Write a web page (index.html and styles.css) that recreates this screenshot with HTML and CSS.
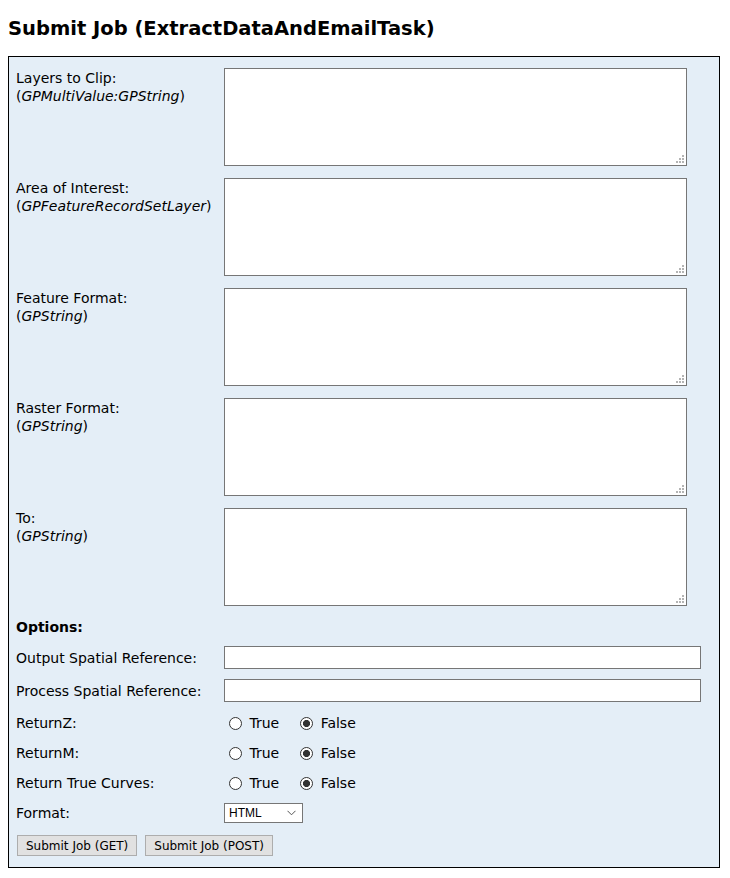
FILE: index.html
```html
<!DOCTYPE html>
<html>
<head>
<meta charset="utf-8">
<title>Submit Job (ExtractDataAndEmailTask)</title>
<link rel="stylesheet" href="styles.css">
</head>
<body>
<h2 class="title">Submit Job (ExtractDataAndEmailTask)</h2>
<form class="panel">
  <div class="row area-row">
    <label class="lbl">Layers to Clip:<br>(<i>GPMultiValue:GPString</i>)</label>
    <div class="area-wrap"><textarea class="area" autofocus></textarea><span class="grip"></span></div>
  </div>
  <div class="row area-row">
    <label class="lbl">Area of Interest:<br>(<i>GPFeatureRecordSetLayer</i>)</label>
    <div class="area-wrap"><textarea class="area"></textarea><span class="grip"></span></div>
  </div>
  <div class="row area-row">
    <label class="lbl">Feature Format:<br>(<i>GPString</i>)</label>
    <div class="area-wrap"><textarea class="area"></textarea><span class="grip"></span></div>
  </div>
  <div class="row area-row">
    <label class="lbl">Raster Format:<br>(<i>GPString</i>)</label>
    <div class="area-wrap"><textarea class="area"></textarea><span class="grip"></span></div>
  </div>
  <div class="row area-row">
    <label class="lbl">To:<br>(<i>GPString</i>)</label>
    <div class="area-wrap"><textarea class="area"></textarea><span class="grip"></span></div>
  </div>
  <div class="options-head">Options:</div>
  <div class="row opt-row">
    <label class="lbl">Output Spatial Reference:</label>
    <input class="txt" type="text">
  </div>
  <div class="row opt-row">
    <label class="lbl">Process Spatial Reference:</label>
    <input class="txt" type="text">
  </div>
  <div class="row opt-row radio-row first-radio">
    <label class="lbl">ReturnZ:</label>
    <div class="radios">
      <label class="ropt"><input class="radio" type="radio" name="rz"> True</label>
      <label class="ropt"><input class="radio" type="radio" name="rz" checked> False</label>
    </div>
  </div>
  <div class="row opt-row radio-row">
    <label class="lbl">ReturnM:</label>
    <div class="radios">
      <label class="ropt"><input class="radio" type="radio" name="rm"> True</label>
      <label class="ropt"><input class="radio" type="radio" name="rm" checked> False</label>
    </div>
  </div>
  <div class="row opt-row radio-row">
    <label class="lbl">Return True Curves:</label>
    <div class="radios">
      <label class="ropt"><input class="radio" type="radio" name="rc"> True</label>
      <label class="ropt"><input class="radio" type="radio" name="rc" checked> False</label>
    </div>
  </div>
  <div class="row opt-row">
    <label class="lbl">Format:</label>
    <div class="select">
      <span class="select-val">HTML</span>
      <svg class="chev" width="9" height="6" viewBox="0 0 9 6"><path d="M0.5 0.8 L4.5 4.8 L8.5 0.8" fill="none" stroke="#555" stroke-width="1"/></svg>
    </div>
  </div>
  <div class="buttons">
    <button type="button" class="btn">Submit Job (GET)</button>
    <button type="button" class="btn">Submit Job (POST)</button>
  </div>
</form>
</body>
</html>
```
FILE: styles.css
```css
html, body {
  background: #ffffff;
}
body {
  margin: 8px;
  font-family: "DejaVu Sans", Verdana, sans-serif;
  font-size: 14px;
  color: #000;
}
.title {
  font-size: 19.5px;
  font-weight: bold;
  margin: 10px 0 14px 0;
  line-height: 22px;
  height: 24px;
}
.panel {
  width: 712px;
  box-sizing: border-box;
  border: 1px solid #000;
  background: #e4eef7;
  padding: 11px 7px 11px 7px;
  display: flex;
  flex-direction: column;
}
.row {
  display: grid;
  grid-template-columns: 208px 1fr;
}
.area-row {
  margin-bottom: 12px;
}
.lbl {
  line-height: 18px;
  padding-top: 1px;
}
.lbl i {
  font-style: italic;
}
.area-wrap {
  position: relative;
  width: 463px;
  height: 98px;
}
.area {
  display: block;
  width: 463px;
  height: 98px;
  box-sizing: border-box;
  border: 1px solid #767676;
  background: #fff;
  margin: 0;
  padding: 2px 3px;
  font-family: "DejaVu Sans", Verdana, sans-serif;
  font-size: 13px;
  resize: none;
  caret-color: #000;
}
.area:focus {
  outline: none;
}
.grip {
  position: absolute;
  right: 3px;
  bottom: 3px;
  width: 8px;
  height: 8px;
  background:
    linear-gradient(#b4b4b4, #b4b4b4) 6px 0 / 2px 2px no-repeat,
    linear-gradient(#b4b4b4, #b4b4b4) 3px 3px / 2px 2px no-repeat,
    linear-gradient(#b4b4b4, #b4b4b4) 6px 3px / 2px 2px no-repeat,
    linear-gradient(#b4b4b4, #b4b4b4) 0 6px / 2px 2px no-repeat,
    linear-gradient(#b4b4b4, #b4b4b4) 3px 6px / 2px 2px no-repeat,
    linear-gradient(#b4b4b4, #b4b4b4) 6px 6px / 2px 2px no-repeat;
}
.options-head {
  font-weight: bold;
  line-height: 18px;
  margin-bottom: 10px;
}
.opt-row {
  align-items: center;
  margin-bottom: 10px;
}
.opt-row .lbl {
  padding-top: 0;
}
.txt {
  width: 477px;
  height: 23px;
  box-sizing: border-box;
  border: 1px solid #767676;
  background: #fff;
  margin: 0;
  padding: 1px 2px;
}
.radio-row {
  height: 20px;
}
.first-radio {
  margin-top: 1px;
}
.radios {
  display: flex;
  align-items: center;
  padding-left: 5px;
}
.ropt {
  display: flex;
  align-items: center;
  white-space: pre;
  margin-right: 21px;
}
.ropt:last-child {
  margin-right: 0;
}
.radio {
  appearance: none;
  -webkit-appearance: none;
  width: 13px;
  height: 13px;
  margin: 0 3px 0 0;
  border: 1px solid #333;
  border-radius: 50%;
  background: #fff;
  box-sizing: border-box;
}
.radio:checked {
  background: radial-gradient(circle, #333 0, #333 3.2px, #fff 3.9px);
}
.select {
  width: 79px;
  height: 20px;
  box-sizing: border-box;
  border: 1px solid #767676;
  background: #fff;
  display: flex;
  align-items: center;
  justify-content: space-between;
  padding: 0 6px 0 4px;
  font-family: "Liberation Sans", Arial, sans-serif;
  font-size: 12px;
}
.chev {
  display: block;
}
.buttons {
  display: flex;
  gap: 8px;
  padding-left: 1px;
  margin-top: 2px;
}
.btn {
  height: 21px;
  box-sizing: border-box;
  border: 1px solid #adadad;
  background: #e1e1e1;
  font-family: "DejaVu Sans", Verdana, sans-serif;
  font-size: 12px;
  padding: 0 8px;
  color: #000;
  margin: 0;
}
```
